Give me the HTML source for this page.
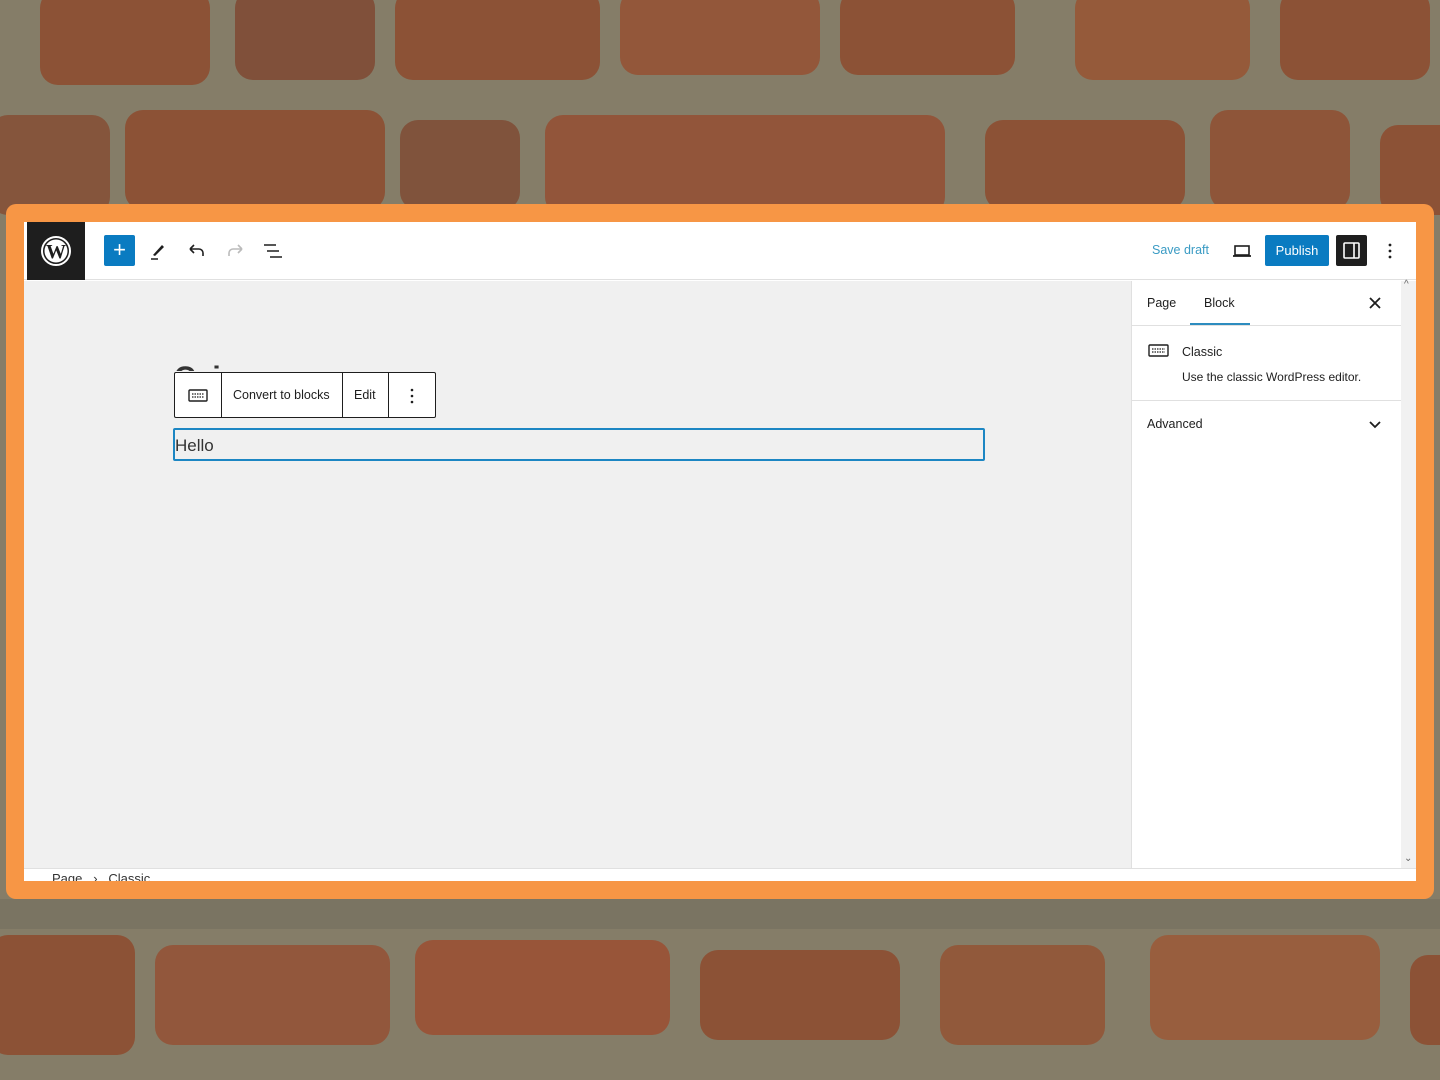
<!DOCTYPE html>
<html><head><meta charset="utf-8">
<style>
*{box-sizing:border-box;margin:0;padding:0}
body{width:1440px;height:1080px;overflow:hidden;position:relative;background:#857d68;font-family:"Liberation Sans",sans-serif}
.b{position:absolute;background:#8c5236;border-radius:18px}
.frame{position:absolute;left:6px;top:204px;width:1428px;height:695px;background:#f79645;border-radius:10px}
.win{position:absolute;left:24px;top:222px;width:1392px;height:659px;background:#fff;overflow:hidden}
.hdr{position:absolute;left:0;top:0;width:1392px;height:58px;border-bottom:1px solid #e0e0e0;background:#fff}
.logo{position:absolute;left:3px;top:0;width:58px;height:58px;background:#1e1e1e}
.canvas{position:absolute;left:0;top:59px;width:1107px;height:587px;background:#f0f0f0}
.side{position:absolute;left:1107px;top:59px;width:270px;height:587px;background:#fff;border-left:1px solid #e0e0e0}
.scroll{position:absolute;left:1377px;top:59px;width:15px;height:587px;background:#f1f1f1}
.foot{position:absolute;left:0;top:646px;width:1392px;height:13px;background:#fff;border-top:1px solid #e0e0e0}
.t{position:absolute;font-size:13px;color:#1e1e1e;white-space:nowrap}
</style></head><body>
<div class="b" style="left:40px;top:-10px;width:170px;height:95px"></div>
<div class="b" style="left:235px;top:-10px;width:140px;height:90px;background:#80503a"></div>
<div class="b" style="left:395px;top:-10px;width:205px;height:90px"></div>
<div class="b" style="left:620px;top:-10px;width:200px;height:85px;background:#93573a"></div>
<div class="b" style="left:840px;top:-10px;width:175px;height:85px"></div>
<div class="b" style="left:1075px;top:-10px;width:175px;height:90px;background:#955a3a"></div>
<div class="b" style="left:1280px;top:-10px;width:150px;height:90px"></div>
<div class="b" style="left:-10px;top:115px;width:120px;height:100px;background:#85553c"></div>
<div class="b" style="left:125px;top:110px;width:260px;height:100px"></div>
<div class="b" style="left:400px;top:120px;width:120px;height:90px;background:#80533c"></div>
<div class="b" style="left:545px;top:115px;width:400px;height:100px;background:#92553a"></div>
<div class="b" style="left:985px;top:120px;width:200px;height:90px"></div>
<div class="b" style="left:1210px;top:110px;width:140px;height:100px;background:#8e5539"></div>
<div class="b" style="left:1380px;top:125px;width:80px;height:90px"></div>
<div class="b" style="left:-10px;top:935px;width:145px;height:120px"></div>
<div class="b" style="left:155px;top:945px;width:235px;height:100px;background:#92573c"></div>
<div class="b" style="left:415px;top:940px;width:255px;height:95px;background:#985539"></div>
<div class="b" style="left:700px;top:950px;width:200px;height:90px"></div>
<div class="b" style="left:940px;top:945px;width:165px;height:100px;background:#91593b"></div>
<div class="b" style="left:1150px;top:935px;width:230px;height:105px;background:#985e3e"></div>
<div class="b" style="left:1410px;top:955px;width:50px;height:90px"></div>
<div style="position:absolute;left:0;top:899px;width:1440px;height:30px;background:#7a7462"></div>

<div class="frame"></div>
<div class="win">
 <div class="hdr">
  <div class="logo">
   <svg width="58" height="58" viewBox="0 0 58 58"><circle cx="29" cy="29" r="14" fill="none" stroke="#fff" stroke-width="2"/><circle cx="29" cy="29" r="11.5" fill="#fff"/><text x="29" y="36" text-anchor="middle" font-family="Liberation Serif" font-weight="bold" font-size="20" fill="#1e1e1e">W</text></svg>
  </div>
  <div style="position:absolute;left:80px;top:13px;width:31px;height:31px;background:#0a7bc1;border-radius:2px;color:#fff;font-size:22px;line-height:30px;text-align:center">+</div>
  <svg style="position:absolute;left:123px;top:18px" width="22" height="22" viewBox="0 0 22 22"><path d="M6 15 L15 5 L17 7 L8 16 Z" fill="#1e1e1e"/><path d="M4 19h7" stroke="#1e1e1e" stroke-width="1.5"/></svg>
  <svg style="position:absolute;left:162px;top:18px" width="22" height="22" viewBox="0 0 22 22"><path d="M4 9h9a4 4 0 0 1 4 4v3M4 9l4-4M4 9l4 4" fill="none" stroke="#1e1e1e" stroke-width="1.6"/></svg>
  <svg style="position:absolute;left:200px;top:18px" width="22" height="22" viewBox="0 0 22 22"><path d="M18 9H9a4 4 0 0 0-4 4v3M18 9l-4-4M18 9l-4 4" fill="none" stroke="#bbb" stroke-width="1.6"/></svg>
  <svg style="position:absolute;left:238px;top:18px" width="22" height="22" viewBox="0 0 22 22"><path d="M2 5h12M5 11h12M8 17h12" stroke="#1e1e1e" stroke-width="1.6"/></svg>
  <div class="t" style="left:1128px;top:21px;color:#3a9bc4;font-size:12.5px">Save draft</div>
  <svg style="position:absolute;left:1207px;top:18px" width="22" height="22" viewBox="0 0 22 22"><rect x="4" y="6" width="14" height="9" fill="none" stroke="#1e1e1e" stroke-width="1.6"/><path d="M2 16h18" stroke="#1e1e1e" stroke-width="1.8"/></svg>
  <div style="position:absolute;left:1241px;top:13px;width:64px;height:31px;background:#0a7bc1;border-radius:2px;color:#fff;font-size:13px;line-height:31px;text-align:center">Publish</div>
  <div style="position:absolute;left:1312px;top:13px;width:31px;height:31px;background:#1e1e1e;border-radius:2px"><svg width="31" height="31" viewBox="0 0 31 31"><rect x="8" y="8" width="15" height="15" rx="1" fill="none" stroke="#fff" stroke-width="1.6"/><path d="M18 8v15" stroke="#fff" stroke-width="1.6"/></svg></div>
  <svg style="position:absolute;left:1360px;top:20px" width="12" height="18" viewBox="0 0 12 18"><circle cx="6" cy="3" r="1.4" fill="#1e1e1e"/><circle cx="6" cy="9" r="1.4" fill="#1e1e1e"/><circle cx="6" cy="15" r="1.4" fill="#1e1e1e"/></svg>
 </div>
 <div class="canvas">
  <div style="position:absolute;left:150px;top:84px;width:80px;height:6px;overflow:hidden"><span style="font-size:30px;font-weight:bold;color:#333;position:absolute;top:-4px">C&nbsp;&nbsp;i</span></div>
  <div style="position:absolute;left:150px;top:91px;width:262px;height:46px;background:#fff;border:1px solid #1e1e1e;border-radius:2px">
   <svg style="position:absolute;left:13px;top:13px" width="20" height="18" viewBox="0 0 20 18"><rect x="1" y="4" width="18" height="11" rx="1" fill="none" stroke="#1e1e1e" stroke-width="1.4"/><path d="M4 8h12M4 11h12" stroke="#1e1e1e" stroke-width="1.2" stroke-dasharray="1.5 1"/></svg>
   <div style="position:absolute;left:46px;top:0;width:1px;height:44px;background:#1e1e1e"></div>
   <div class="t" style="left:58px;top:15px;font-size:12.5px">Convert to blocks</div>
   <div style="position:absolute;left:167px;top:0;width:1px;height:44px;background:#1e1e1e"></div>
   <div class="t" style="left:179px;top:15px;font-size:12.5px">Edit</div>
   <div style="position:absolute;left:213px;top:0;width:1px;height:44px;background:#1e1e1e"></div>
   <svg style="position:absolute;left:231px;top:14px" width="12" height="18" viewBox="0 0 12 18"><circle cx="6" cy="3" r="1.3" fill="#1e1e1e"/><circle cx="6" cy="9" r="1.3" fill="#1e1e1e"/><circle cx="6" cy="15" r="1.3" fill="#1e1e1e"/></svg>
  </div>
  <div style="position:absolute;left:149px;top:147px;width:812px;height:33px;border:2px solid #1c86c3;border-radius:2px"></div>
  <div class="t" style="left:151px;top:155px;font-size:17px;color:#333">Hello</div>
 </div>
 <div class="side">
  <div class="t" style="left:15px;top:15px;font-size:12.5px">Page</div>
  <div class="t" style="left:72px;top:15px;font-size:12.5px">Block</div>
  <div style="position:absolute;left:58px;top:42px;width:60px;height:3px;background:#2d8cbf"></div>
  <svg style="position:absolute;left:236px;top:15px" width="14" height="14" viewBox="0 0 14 14"><path d="M2 2l10 10M12 2L2 12" stroke="#1e1e1e" stroke-width="1.8"/></svg>
  <div style="position:absolute;left:0;top:44px;width:270px;height:1px;background:#e0e0e0"></div>
  <svg style="position:absolute;left:16px;top:62px" width="22" height="16" viewBox="0 0 22 16"><rect x="1" y="2" width="19" height="11" rx="1" fill="none" stroke="#1e1e1e" stroke-width="1.4"/><path d="M4 6h13M4 9h13" stroke="#1e1e1e" stroke-width="1.2" stroke-dasharray="1.5 1"/></svg>
  <div class="t" style="left:50px;top:64px;font-size:12.5px">Classic</div>
  <div class="t" style="left:50px;top:89px;font-size:12px">Use the classic WordPress editor.</div>
  <div style="position:absolute;left:0;top:119px;width:270px;height:1px;background:#e0e0e0"></div>
  <div class="t" style="left:15px;top:136px;font-size:12.5px">Advanced</div>
  <svg style="position:absolute;left:236px;top:137px" width="14" height="14" viewBox="0 0 14 14"><path d="M2 4l5 5 5-5" fill="none" stroke="#1e1e1e" stroke-width="1.8"/></svg>
 </div>
 <div class="scroll"><div class="t" style="left:3px;top:-2px;font-size:10px;color:#666">^</div><div class="t" style="left:3px;top:572px;font-size:10px;color:#666">⌄</div></div>
 <div class="foot"><div class="t" style="left:28px;top:2px;color:#333">Page &nbsp;&nbsp;›&nbsp;&nbsp; Classic</div></div>
</div>
</body></html>
